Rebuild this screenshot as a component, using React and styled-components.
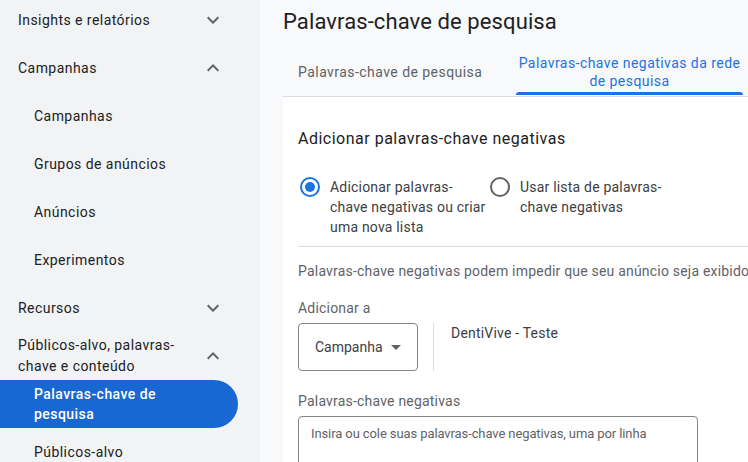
import React from "react";
import styled, { createGlobalStyle } from "styled-components";

const Global = createGlobalStyle`
  html, body { margin: 0; padding: 0; }
  body { font-family: Roboto, "Noto Sans", Arial, sans-serif; background: #f8f9fa; overflow: hidden; }
  * { box-sizing: border-box; }
`;

const Page = styled.div`
  display: flex;
  width: 748px;
  height: 462px;
  overflow: hidden;
`;

const Sidebar = styled.nav`
  width: 260px;
  flex: none;
  background: #f1f3f4;
`;

const NavList = styled.div`
  margin-top: -4px;
  display: flex;
  flex-direction: column;
`;

const NavRow = styled.div`
  width: 238px;
  height: 48px;
  flex: none;
  display: flex;
  align-items: center;
  justify-content: space-between;
  padding-left: ${(p) => (p.$sub ? 34 : 18)}px;
  padding-right: 13px;
  font-size: 14px;
  letter-spacing: 0.45px;
  color: ${(p) => (p.$active ? "#ffffff" : "#202124")};
  font-weight: ${(p) => (p.$active ? 500 : 400)};
  background: ${(p) => (p.$active ? "#1967d2" : "transparent")};
  border-radius: 0 24px 24px 0;
`;

const NavText = styled.span`
  max-width: ${(p) => p.$max || 200}px;
  line-height: ${(p) => (p.$tight ? 20 : 21)}px;
`;

const Chevron = ({ up }) => (
  <svg width="24" height="24" viewBox="0 0 24 24" style={{ flex: "none" }}>
    <path
      d={up ? "M7.4 15.4 12 10.8l4.6 4.6L18 14l-6-6-6 6z" : "M7.4 8.6 12 13.2l4.6-4.6L18 10l-6 6-6-6z"}
      fill="#5f6368"
    />
  </svg>
);

const Main = styled.main`
  flex: 1;
  min-width: 0;
  padding-left: 23px;
  display: flex;
  flex-direction: column;
`;

const Title = styled.h1`
  margin: 0;
  flex: none;
  height: 48px;
  padding-top: 8px;
  font-size: 22px;
  line-height: 28px;
  font-weight: 400;
  letter-spacing: 0.1px;
  color: #202124;
  white-space: nowrap;
`;

const Tabs = styled.div`
  display: flex;
  flex: none;
  height: 48px;
`;

const Tab = styled.div`
  width: ${(p) => p.$w}px;
  flex: none;
  display: flex;
  align-items: center;
  justify-content: ${(p) => (p.$active ? "center" : "flex-start")};
  padding-left: ${(p) => (p.$active ? 0 : 15)}px;
  text-align: center;
  font-size: 14px;
  line-height: 18px;
  letter-spacing: 0.45px;
  color: ${(p) => (p.$active ? "#1a73e8" : "#5f6368")};
  position: relative;
  &::after {
    content: "";
    display: ${(p) => (p.$active ? "block" : "none")};
    position: absolute;
    left: 0;
    right: 0;
    bottom: 1px;
    height: 3px;
    background: #1a73e8;
    border-radius: 3px 3px 0 0;
  }
`;

const Card = styled.section`
  flex: 1;
  background: #ffffff;
  border-top: 1px solid #dadce0;
  padding: 30px 0 0 15px;
  color: #202124;
  letter-spacing: 0.2px;
`;

const CardTitle = styled.h2`
  margin: 0;
  font-size: 16px;
  line-height: 24px;
  font-weight: 400;
  letter-spacing: 0.5px;
  color: #202124;
`;

const RadioGroup = styled.div`
  display: flex;
  margin-top: 26px;
  padding-bottom: 9px;
  border-bottom: 1px solid #dadce0;
`;

const RadioOption = styled.label`
  width: 190px;
  flex: none;
  display: flex;
  gap: 10px;
  padding-left: 2px;
`;

const RadioCircle = styled.span`
  width: 20px;
  height: 20px;
  flex: none;
  border-radius: 50%;
  border: 2px solid ${(p) => (p.$checked ? "#1a73e8" : "#5f6368")};
  display: flex;
  align-items: center;
  justify-content: center;
  &::after {
    content: "";
    width: 10px;
    height: 10px;
    border-radius: 50%;
    background: #1a73e8;
    display: ${(p) => (p.$checked ? "block" : "none")};
  }
`;

const RadioText = styled.span`
  width: 158px;
  flex: none;
  font-size: 14px;
  line-height: 20px;
  color: #3c4043;
`;

const Hint = styled.p`
  margin: 14px 0 0;
  font-size: 14px;
  line-height: 20px;
  color: #5f6368;
  white-space: nowrap;
`;

const FieldLabel = styled.div`
  margin-top: ${(p) => p.$mt}px;
  font-size: 14px;
  line-height: 20px;
  color: #5f6368;
`;

const TargetRow = styled.div`
  display: flex;
  margin-top: 5px;
  height: 48px;
`;

const Select = styled.div`
  width: 120px;
  height: 48px;
  border: 1px solid #80868b;
  border-radius: 4px;
  display: flex;
  align-items: center;
  padding-left: 16px;
  gap: 8px;
  font-size: 14px;
  letter-spacing: 0;
  color: #3c4043;
`;

const Caret = styled.span`
  width: 0;
  height: 0;
  border-left: 5px solid transparent;
  border-right: 5px solid transparent;
  border-top: 5px solid #5f6368;
`;

const VDivider = styled.div`
  width: 1px;
  background: #dadce0;
  margin: 0 17px 0 15px;
`;

const TargetName = styled.div`
  font-size: 14px;
  line-height: 20px;
  color: #3c4043;
`;

const TextArea = styled.div`
  margin-top: 5px;
  width: 400px;
  height: 80px;
  border: 1px solid #80868b;
  border-radius: 4px;
  padding: 8px 12px;
  font-size: 13px;
  line-height: 18px;
  letter-spacing: -0.1px;
  color: #5f6368;
`;

const nav = [
  { label: "Insights e relatórios", chevron: "down" },
  { label: "Campanhas", chevron: "up" },
  { label: "Campanhas", sub: true },
  { label: "Grupos de anúncios", sub: true },
  { label: "Anúncios", sub: true },
  { label: "Experimentos", sub: true },
  { label: "Recursos", chevron: "down" },
  { label: "Públicos-alvo, palavras-chave e conteúdo", chevron: "up", max: 175 },
  { label: "Palavras-chave de pesquisa", sub: true, active: true, max: 150, tight: true },
  { label: "Públicos-alvo", sub: true },
];

export default function App() {
  return (
    <>
      <Global />
      <Page>
        <Sidebar>
          <NavList>
            {nav.map((n, i) => (
              <NavRow key={i} $sub={n.sub} $active={n.active}>
                <NavText $max={n.max} $tight={n.tight}>{n.label}</NavText>
                {n.chevron && <Chevron up={n.chevron === "up"} />}
              </NavRow>
            ))}
          </NavList>
        </Sidebar>
        <Main>
          <Title>Palavras-chave de pesquisa</Title>
          <Tabs>
            <Tab $w={233}>Palavras-chave de pesquisa</Tab>
            <Tab $w={227} $active>Palavras-chave negativas da rede de pesquisa</Tab>
          </Tabs>
          <Card>
            <CardTitle>Adicionar palavras-chave negativas</CardTitle>
            <RadioGroup>
              <RadioOption>
                <RadioCircle $checked />
                <RadioText>Adicionar palavras-chave negativas ou criar uma nova lista</RadioText>
              </RadioOption>
              <RadioOption>
                <RadioCircle />
                <RadioText>Usar lista de palavras-chave negativas</RadioText>
              </RadioOption>
            </RadioGroup>
            <Hint>Palavras-chave negativas podem impedir que seu anúncio seja exibido</Hint>
            <FieldLabel $mt={17}>Adicionar a</FieldLabel>
            <TargetRow>
              <Select>
                Campanha <Caret />
              </Select>
              <VDivider />
              <TargetName>DentiVive - Teste</TargetName>
            </TargetRow>
            <FieldLabel $mt={20}>Palavras-chave negativas</FieldLabel>
            <TextArea>Insira ou cole suas palavras-chave negativas, uma por linha</TextArea>
          </Card>
        </Main>
      </Page>
    </>
  );
}
